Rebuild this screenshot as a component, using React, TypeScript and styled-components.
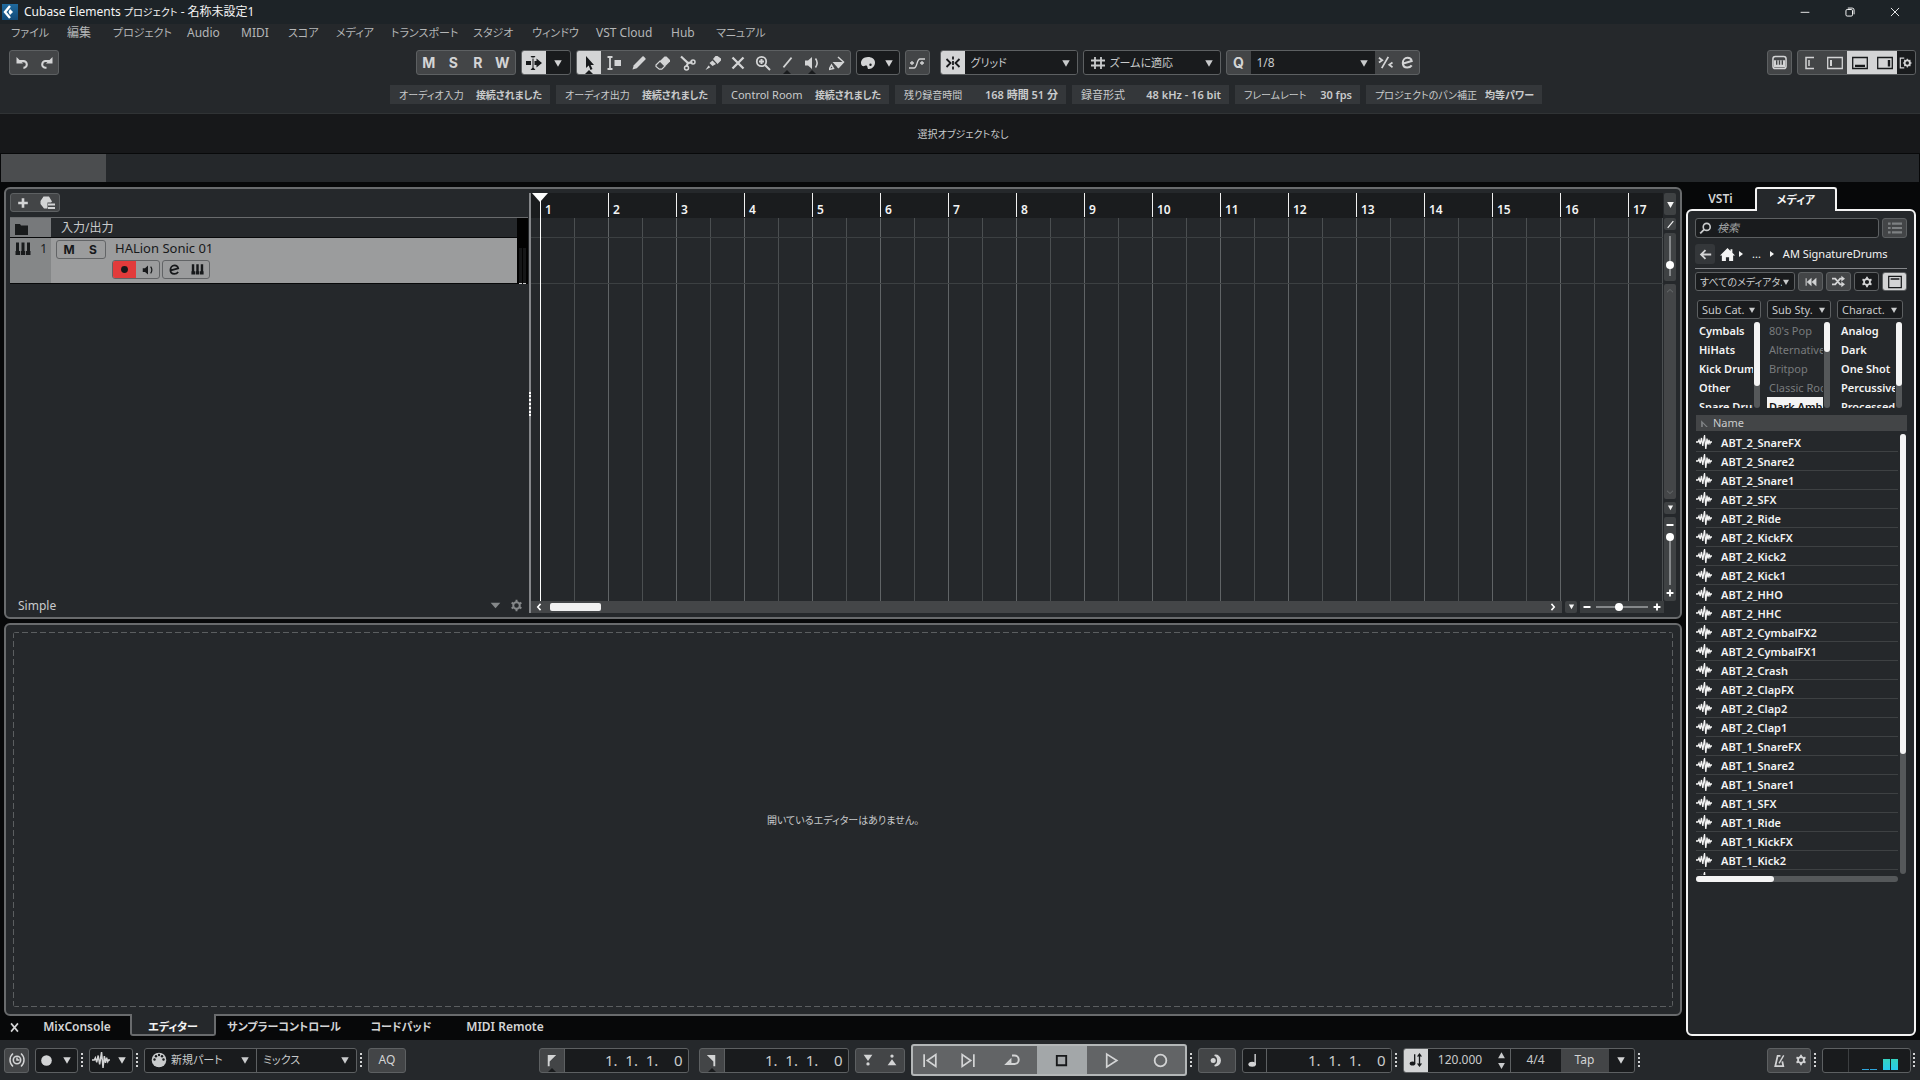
import React from "react";
import styled, { createGlobalStyle, css } from "styled-components";

const c = {
  panel: "#25282b",
  field: "#191b1d",
  button: "#434547",
  line: "#5d6062",
  zone: "#696b6d",
  text: "#c9cbcc",
  bright: "#f4f4f4",
  light: "#d3d4d5",
};

const Global = createGlobalStyle`
  *, *::before, *::after { box-sizing: border-box; }
  html, body { margin: 0; background: #070809; }
  body, button, input, select, table {
    font-family: "Noto Sans", "Noto Sans CJK JP", sans-serif;
    font-size: 12px;
    line-height: 16px;
    font-feature-settings: "palt";
    color: ${c.text};
  }
  button, input, select { margin: 0; padding: 0; border: 0; background: none; outline: none; }
  button { display: flex; align-items: center; justify-content: center; }
  svg { display: block; flex: none; }
`;

/* ---------- icons ---------- */

type IconName = keyof typeof icons;
const s = (w: number) => ({ fill: "none", stroke: "currentColor", strokeWidth: w });
const hasKana = (t: string) => /[ぁ-ヶ]/.test(t);

const icons = {
  undo: <><path d="M4 6.5h5a3.6 3.6 0 0 1 0 7.2" {...s(2.2)} /><path d="M1.6 2v7h7z" fill="currentColor" /></>,
  redo: <><path d="M8 13.6H7A3.6 3.6 0 0 1 7 6.4h5" {...s(2.2)} /><path d="M14.4 2v7h-7z" fill="currentColor" /></>,
  autoscroll: <path d="M0 6h5v4H0zM8.500 6h2V3.500L16 8l-5.500 4.500V10h-2zM4.500 1l2.500 3 2.500-3zM4.500 15l2.500-3 2.500 3zM6.500 2h1v12h-1z" fill="currentColor" />,
  arrow: <path d="M5 1v12l2.700-2.500L9.500 15l2-.9-1.900-4.200H13z" fill="currentColor" />,
  range: <><path d="M1.500 2h5M1.500 14h5M4 2v12" {...s(1.800)} /><path d="M8.500 5H15v6H8.500z" fill="currentColor" /></>,
  pencil: <path d="M1.500 14.500l1.300-4.300 8.600-8.600a1 1 0 0 1 1.400 0l1.600 1.600a1 1 0 0 1 0 1.400l-8.600 8.600z" fill="currentColor" />,
  eraser: <><path d="M1 10l4-4 5 5-3.200 3.200H4.300L1 11.500z" {...s(1.200)} /><path d="M5 6l4.500-4.500h2L15 5v1.500L10.500 11z" fill="currentColor" /></>,
  scissors: <><path d="M1 1.500l7 6.500 4.500-.8M8 8l-1.500 3.500" {...s(2.200)} /><circle cx="13" cy="7" r="2" {...s(1.500)} /><circle cx="6.500" cy="13" r="2" {...s(1.500)} /></>,
  glue: <path d="M0.500 15l3-4.500 1.800 1.800zM4.500 8l3-2.500 3.500 3.500-3.500 2zM8 4l2.500-3h2L16 3.500v2L12.500 9z" fill="currentColor" />,
  cross: <path d="M2.500 2.500l11 11M13.500 2.500l-11 11" {...s(2.300)} />,
  zoom: <><circle cx="6.500" cy="6.500" r="4.700" {...s(1.800)} /><path d="M4 6.500h5M6.500 4v5M10 10l5 5" {...s(2)} /></>,
  slash: <path d="M3 14L13 2" {...s(2)} />,
  speaker: <><path d="M1 5.500h3L8 2v12l-4-3.500H1z" fill="currentColor" /><path d="M11.500 3.500c2.200 3 2.200 6 0 9" {...s(1.600)} /></>,
  bucket: <><path d="M3.500 7h11L9 13z" fill="currentColor" /><path d="M9 2l5.500 5L9 13M0 14.500l2.500-4.500 2 3.500z" {...s(1.500)} /></>,
  palette: <path d="M8 2C3.500 2 1 4.800 1 8c0 2 1 3.200 2.500 3.200S6 10 7 11s0 3 2 3c3.500 0 6-3 6-6.500C15 4.200 12 2 8 2zm2.500 6.500a1.200 1.200 0 1 1 0 2.400 1.200 1.200 0 0 1 0-2.400z" fill="currentColor" />,
  curve: <path d="M0 13h5c3.500 0 2.500-9 6-9h5M1 8h4M11 8h4M3 6v4M13 6v4" {...s(1.300)} />,
  snap: <><path d="M8 1.500v3M8 11.500v3M1.500 4l4 4-4 4M14.500 4l-4 4 4 4M8 6v4" {...s(1.800)} /></>,
  hash: <path d="M5 2v12M11 2v12M1 5.500h14M1 10.500h14" {...s(1.800)} />,
  swing: <><path d="M4 14L11 2M1 3l3.500 2.500L1 8M15.500 8L12 10.500l3.500 2.500" {...s(1.900)} /></>,
  edit: <path d="M3.500 9L12.500 6.500C12 4 10 3 8 3 5 3 3 5.500 3 8.500s2 4.800 4.700 4.800c2 0 3.700-.8 4.800-2.300" {...s(2.200)} />,
  keyboard: <><rect x="1" y="1.500" width="14" height="13" rx="2.500" {...s(1.600)} /><path d="M2 5.500h12V13H2z" fill="currentColor" /><path d="M5 5.500v5M8 5.500v5M11 5.500v5" stroke="#434547" strokeWidth="1.500" /></>,
  paneInfo: <path d="M12 2.500H4v11h8M7 5v6" {...s(1.500)} />,
  paneLeft: <><path d="M0.700 2.500h14.600v11H.7z" {...s(1.300)} /><path d="M4 5v6" {...s(2)} /></>,
  paneBottom: <><path d="M0.700 2.500h14.600v11H.7z" {...s(1.300)} /><path d="M3 10.800h10" {...s(2.200)} /></>,
  paneRight: <><path d="M0.700 2.500h14.600v11H.7z" {...s(1.300)} /><path d="M12 5v6.500" {...s(2.400)} /></>,
  paneSetup: <><path d="M6 2.500H1.500v11H6" {...s(1.400)} /><circle cx="9.500" cy="8" r="3.100" {...s(2)} /><path d="M9.500 3v10M4.500 8h10M6 4.500l7 7M13 4.500l-7 7" {...s(1.300)} /><circle cx="9.500" cy="8" r="1.900" fill="#191b1d" /></>,
  gear: <><circle cx="8" cy="8" r="4" {...s(2.400)} /><path d="M8 1v3M8 12v3M2 4.500l2.500 1.500M11.500 10l2.500 1.500M2 11.500L4.500 10M11.500 6L14 4.500" {...s(2.400)} /></>,
  plus: <path d="M8 2.500v11M2.500 8h11" {...s(3)} />,
  preset: <><path d="M4.500 1.500H10l3 5-1 1H8.500v6H5L1.500 9V6z" fill="currentColor" /><path d="M9 9.500h7M9 13h7" {...s(2)} /></>,
  folder: <path d="M0 3h5l1 1.500h7V14H0z" fill="currentColor" />,
  keys: <><path d="M1 1.500h3v8.500H5V14H.500V10H1zM6.500 1.500h3V10h.7v4H5.800v-4h.7zM12 1.500h3V10h.5v4H11v-4h1z" fill="currentColor" /></>,
  dot: <circle cx="8" cy="8" r="5" fill="currentColor" />,
  tri: <path d="M2 3.500h12L8 14z" fill="currentColor" />,
  fold: <path d="M1 4h14l-7 8z" fill="currentColor" />,
  search: <><circle cx="9.500" cy="6" r="4.300" {...s(2)} /><path d="M6.500 9L1.500 14" {...s(2.200)} /></>,
  list: <path d="M0 3h3M0 8h3M0 13h3M4.500 3H16M4.500 8H16M4.500 13H16" {...s(2.300)} />,
  back: <path d="M15 8H3M8 2.500L2.500 8 8 13.500" {...s(2.200)} />,
  home: <path d="M8 1L0 9h2v6h4.300v-4h3.400v4H14V9h2l-2.800-2.800V2.500h-2v1.700z" fill="currentColor" />,
  right: <path d="M4 2v12l8-6z" fill="currentColor" />,
  rewind: <path d="M1.500 3v10M8 4L3.500 8 8 12zM14.500 4L10 8l4.500 4z" fill="currentColor" stroke="currentColor" strokeWidth="1.400" />,
  shuffle: <><path d="M0 4.500h4l6 7h3M0 11.500h4l6-7h3" {...s(2.200)} /><path d="M11.500 1l4.500 3.500L11.500 8zM11.500 8l4.500 3.500-4.500 3.500z" fill="currentColor" /></>,
  layout: <><path d="M.8 1.500h14.400v13H.8z" {...s(1.400)} /><path d="M3 4.500h10" {...s(1.700)} /></>,
  wave: <path d="M0 8h2l1-2 1.200 4L5.500 4l1.300 8L8.500 1l1.300 14L11 4.500l1 6 1-4.500 1 3.500.7-1.500H16" {...s(1.300)} />,
  sort: <path d="M2 2v12h3V8l6 6h3z" fill="currentColor" />,
  close: <path d="M3 2l10 12M13 2L3 14" {...s(2.400)} />,
  clock: <><circle cx="8" cy="8" r="3.700" {...s(1.600)} /><path d="M8 5.500V8h2.500M4 1.500C0 5 0 11 4 14.500M12 1.500c4 3.500 4 9.500 0 13" {...s(1.500)} /></>,
  midi: <><circle cx="8" cy="8" r="7.300" fill="currentColor" /><g fill="#191b1d"><circle cx="3.500" cy="7.500" r="1.200" /><circle cx="5" cy="4.300" r="1.200" /><circle cx="8" cy="3" r="1.200" /><circle cx="11" cy="4.300" r="1.200" /><circle cx="12.500" cy="7.500" r="1.200" /></g></>,
  flagL: <path d="M4 2h9L6 9v5H4z" fill="currentColor" />,
  flagR: <path d="M12 2H3l7 7v5h2z" fill="currentColor" />,
  punchIn: <><path d="M3 2h10L8 9z" fill="currentColor" /><circle cx="8" cy="12.500" r="1.900" fill="currentColor" /></>,
  punchOut: <><path d="M3 14h10L8 7z" fill="currentColor" /><circle cx="8" cy="3.500" r="1.900" fill="currentColor" /></>,
  toStart: <path d="M2 2v12M13 2.500v11L5 8z" {...s(1.600)} />,
  toEnd: <path d="M14 2v12M3 2.500v11L11 8z" {...s(1.600)} />,
  cycle: <path d="M8 3.500h2.500a3.900 3.900 0 0 1 0 8.500H2.500l4-4v4" {...s(1.900)} />,
  stop: <path d="M3 3h10v10H3z" {...s(2)} />,
  play: <path d="M3.500 2l9.500 6-9.500 6z" {...s(1.600)} />,
  record: <circle cx="8" cy="8" r="5.500" {...s(1.700)} />,
  sync: <><circle cx="4.500" cy="8" r="2.700" fill="currentColor" /><path d="M6 2.500c3.300-.5 6 2 6 5.500s-2.700 6-6 5.500c4.500-1.500 4.500-9.500 0-11z" fill="currentColor" stroke="currentColor" strokeWidth="1.500" /></>,
  note: <><ellipse cx="5.500" cy="12" rx="4" ry="2.700" fill="currentColor" /><path d="M8.700 1v11" {...s(1.500)} /></>,
  tempo: <><ellipse cx="4" cy="12" rx="3.200" ry="2.400" fill="currentColor" /><path d="M6.500 1.500V12M12 3v10" {...s(1.500)} /><path d="M12 0l3 4H9zM12 16l3-4H9z" fill="currentColor" /></>,
  metronome: <><path d="M11 9l1 5H3.500L6 3h3" {...s(1.900)} /><path d="M7.500 11L12.500 2.500" {...s(1.500)} /></>,
  up: <path d="M2 13h12L8 2z" fill="currentColor" />,
  chevL: <path d="M10.500 3L6 8l4.500 5" {...s(2.500)} />,
  chevR: <path d="M5.500 3L10 8l-4.500 5" {...s(2.500)} />,
  chevU: <path d="M2 10.500L8 5l6 5.500" {...s(1.300)} />,
  chevD: <path d="M2 5.500L8 11l6-5.500" {...s(1.300)} />,
  minus: <path d="M1 8h14" {...s(4)} />,
  winMin: <path d="M1 8.500h14" {...s(1.400)} />,
  winRestore: <><rect x="1.500" y="4" width="10.500" height="10.500" rx="2" {...s(1.500)} /><path d="M4.500 1.700h7a3 3 0 0 1 3 3v7" {...s(1.500)} /></>,
  winClose: <path d="M1.500 1.500l13 13M14.500 1.500l-13 13" {...s(1.400)} />,
};

const Icon = ({ name, size = 16 }: { name: IconName; size?: number }) => (
  <svg width={size} height={size} viewBox="0 0 16 16" aria-hidden="true">{icons[name]}</svg>
);

/* ---------- shared controls ---------- */

const Group = styled.div<{ $dark?: boolean; $w?: number }>`
  display: flex;
  flex: none;
  height: 25px;
  width: ${(p) => (p.$w ? `${p.$w}px` : "auto")};
  border: 1px solid ${c.line};
  border-radius: 3px;
  overflow: hidden;
  background: ${(p) => (p.$dark ? c.field : c.button)};
`;

const Btn = styled.button<{ $w?: number; $on?: boolean; $dark?: boolean; $notch?: boolean; $dim?: boolean }>`
  position: relative;
  flex: ${(p) => (p.$w ? `0 0 ${p.$w}px` : "1 1 0")};
  min-width: 0;
  color: ${(p) => (p.$on ? "#17191b" : p.$dim ? "#7d8082" : c.light)};
  background: ${(p) => (p.$on ? c.light : p.$dark ? c.field : "transparent")};
  ${(p) => p.$notch && css`
    &::after {
      content: "";
      position: absolute;
      left: 50%;
      bottom: 0;
      margin-left: -4px;
      border: 4px solid transparent;
      border-top: 0;
      border-bottom-color: ${c.field};
    }
  `}
`;

const Letter = styled(Btn)`
  font: 700 14px/16px Inter, sans-serif;
`;

const SelectBox = styled.label<{ $w?: number; $div?: boolean; $tight?: boolean; $fs: number }>`
  position: relative;
  display: flex;
  align-items: center;
  flex: ${(p) => (p.$w ? `0 0 ${p.$w}px` : "1 1 0")};
  min-width: 0;
  gap: 4px;
  padding-left: ${(p) => (p.$tight ? 4 : 6)}px;
  background: ${c.field};
  border-left: ${(p) => (p.$div ? `1px solid ${c.line}` : "0")};
  select {
    appearance: none;
    flex: 1;
    min-width: 0;
    height: 100%;
    padding-right: ${(p) => (p.$tight ? 12 : 20)}px;
    font-size: ${(p) => p.$fs}px;
  }
  > svg:last-child { position: absolute; right: ${(p) => (p.$tight ? 4 : 6)}px; pointer-events: none; }
`;

type DropProps = { label: string; value: string; w?: number; icon?: IconName; div?: boolean; tight?: boolean; fs?: number };
const Drop = ({ label, value, w, icon, div, tight, fs = 12 }: DropProps) => (
  <SelectBox $w={w} $div={div} $tight={tight} $fs={fs}>
    {icon && <Icon name={icon} size={16} />}
    <select aria-label={label}><option>{value}</option></select>
    <Icon name="tri" size={tight ? 8 : 10} />
  </SelectBox>
);

/* ---------- header ---------- */

const Page = styled.div`
  display: flex;
  flex-direction: column;
  height: 100vh;
  min-height: 900px;
  min-width: 1640px;
`;
const Header = styled.header`
  background: ${c.panel};
  border-bottom: 1px solid #303335;
`;
const TitleBar = styled.div`
  display: flex;
  align-items: center;
  height: 24px;
  gap: 6px;
  padding-left: 2px;
  background: #1d2327;
  color: ${c.bright};
`;
const AppLogo = styled.svg`
  width: 16px;
  height: 16px;
  background: linear-gradient(#1f6a9e, #124a78);
`;
const WindowTitle = styled.h1`
  margin: 0;
  font-size: 12px;
  font-weight: 400;
  flex: 1;
  small { font-size: 10px; }
`;
const WinButton = styled.button`
  width: 45px;
  height: 22px;
  color: #fff;
`;
const WinButtons = styled.div`
  display: flex;
  padding-right: 3px;
`;
const Menu = styled.nav`
  display: flex;
  height: 18px;
  padding: 1px 0 0 11px;
`;
const MenuItem = styled.a<{ $w: number; $kana: boolean }>`
  width: ${(p) => p.$w}px;
  white-space: nowrap;
  color: #b4b6b7;
  text-decoration: none;
  font-size: ${(p) => (p.$kana ? 11 : 12)}px;
`;
const menu: [string, number][] = [
  ["ファイル", 56], ["編集", 46], ["プロジェクト", 74], ["Audio", 54], ["MIDI", 47], ["スコア", 48],
  ["メディア", 55], ["トランスポート", 82], ["スタジオ", 59], ["ウィンドウ", 64], ["VST Cloud", 75], ["Hub", 45], ["マニュアル", 60],
];
const Toolbar = styled.div`
  display: flex;
  justify-content: space-between;
  padding: 8px 4px 10px 9px;
`;
const Cluster = styled.div<{ $gap?: number; $shift?: number }>`
  display: flex;
  align-items: center;
  gap: ${(p) => p.$gap ?? 5}px;
  padding-left: ${(p) => p.$shift ?? 0}px;
`;
const InfoLine = styled.div`
  display: flex;
  justify-content: center;
  gap: 6px;
  padding: 0 0 9px 12px;
`;
const Chip = styled.div<{ $w: number }>`
  display: flex;
  align-items: center;
  justify-content: space-between;
  gap: 8px;
  height: 19px;
  min-width: ${(p) => p.$w}px;
  padding: 0 8px 0 9px;
  background: #34373a;
  white-space: nowrap;
`;
const ChipText = styled.span<{ $kana: boolean; $bold?: boolean }>`
  font-size: ${(p) => (p.$kana ? 10 : 11)}px;
  font-weight: ${(p) => (p.$bold ? 600 : 400)};
`;
const info: [string, string, number][] = [
  ["オーディオ入力", "接続されました", 160], ["オーディオ出力", "接続されました", 160], ["Control Room", "接続されました", 167],
  ["残り録音時間", "168 時間 51 分", 171], ["録音形式", "48 kHz - 16 bit", 157], ["フレームレート", "30 fps", 125],
  ["プロジェクトのパン補正", "均等パワー", 176],
];
const StatusLine = styled.div`
  display: flex;
  align-items: center;
  justify-content: center;
  height: 40px;
  padding-left: 6px;
  background: #17181a;
  border-bottom: 1px solid #08090a;
  font-size: 10px;
`;
const Overview = styled.div`
  height: 28px;
  margin: 0 1px 5px;
  background: ${c.panel};
  div { width: 105px; height: 100%; background: #4b4d4f; }
`;

/* ---------- project zone ---------- */

const Main = styled.main`
  flex: 1;
  min-height: 0;
  display: grid;
  grid-template-columns: minmax(0, 1fr) 230px;
  gap: 4px;
  padding: 0 4px;
`;
const LeftZone = styled.div`
  display: flex;
  flex-direction: column;
  min-height: 0;
`;
const Frame = styled.section<{ $grow: number }>`
  display: flex;
  flex: ${(p) => p.$grow} 1 0;
  min-height: 0;
  border: 2px solid ${c.zone};
  border-radius: 6px;
  background: ${c.panel};
`;
const TrackList = styled.div`
  display: flex;
  flex-direction: column;
  width: 523px;
  padding: 4px 1px 4px 4px;
`;
const SmallGroup = styled(Group)<{ $h?: number }>`
  height: ${(p) => p.$h ?? 19}px;
`;
const TrackTable = styled.div`
  display: grid;
  grid-template-columns: minmax(0, 1fr) 11px;
  margin-top: 5px;
  border-top: 1px solid ${c.zone};
`;
const Rows = styled.div`
  display: flex;
  flex-direction: column;
`;
const TrackRow = styled.div<{ $h: number; $sel?: boolean }>`
  display: flex;
  height: ${(p) => p.$h}px;
  border-bottom: 1px solid #08090a;
  background: ${(p) => (p.$sel ? "#9b9c9d" : c.panel)};
`;
const TrackIcon = styled.div<{ $sel?: boolean }>`
  display: flex;
  align-items: flex-start;
  justify-content: space-between;
  width: 41px;
  padding: 3px 4px 0 5px;
  background: ${(p) => (p.$sel ? "#858788" : "#77797b")};
  color: #191b1c;
`;
const FolderName = styled.span`
  padding: 2px 10px 0;
`;
const TrackBody = styled.div`
  display: grid;
  grid-template-columns: 50px 1fr;
  grid-template-rows: 19px 19px;
  column-gap: 6px;
  row-gap: 1px;
  padding: 2px 5px;
  color: #17191b;
  strong { padding-left: 3px; font-weight: 400; font-size: 13px; }
`;
const TrackGroup = styled.div<{ $w: number }>`
  display: flex;
  width: ${(p) => p.$w}px;
  height: 19px;
  border: 1px solid #626466;
  border-radius: 3px;
  overflow: hidden;
  button { flex: 1; color: #17191b; font: 700 12px/14px Inter, sans-serif; }
`;
const RecButton = styled.button`
  background: #e23b3b;
`;
const Meter = styled.div`
  display: flex;
  align-items: flex-end;
  justify-content: space-evenly;
  background: #020202;
  i { width: 3px; height: 36px; border-bottom: 1px solid #c8c8c8; background: #151617; }
`;
const TrackFooter = styled.div`
  display: flex;
  align-items: center;
  gap: 9px;
  height: 14px;
  margin-top: auto;
  padding: 0 5px 0 8px;
  color: #85888a;
  span { flex: 1; color: ${c.text}; }
`;
const Splitter = styled.div`
  position: relative;
  width: 2px;
  margin: 4px 0;
  background: #85878a;
  &::after {
    content: "";
    position: absolute;
    left: 0;
    top: 199px;
    height: 24px;
    border-left: 2px dotted #fff;
  }
`;
const Arrange = styled.div`
  display: grid;
  flex: 1;
  min-width: 0;
  grid-template-columns: minmax(0, 1fr) 12px;
  grid-template-rows: minmax(0, 1fr) 12px;
  column-gap: 1px;
  padding: 4px 4px 4px 0;
`;
const Canvas = styled.div`
  position: relative;
  display: flex;
  flex-direction: column;
  min-width: 0;
  overflow: hidden;
`;
const Ruler = styled.ol`
  display: flex;
  height: 25px;
  margin: 0;
  padding: 0 0 0 9px;
  list-style: none;
  background: #1a1c1e;
`;
const Bar = styled.li`
  flex: 0 0 68px;
  height: 24px;
  padding: 9px 0 0 4px;
  border-left: 1px solid #f0f0f0;
  font-weight: 600;
  color: ${c.bright};
`;
const Lane = styled.div<{ $h?: number }>`
  flex: ${(p) => (p.$h ? `0 0 ${p.$h}px` : "1")};
  border-bottom: ${(p) => (p.$h ? "1px solid #3c4042" : "0")};
  background-image: linear-gradient(90deg, #606466 1px, transparent 1px), linear-gradient(90deg, #4b4f51 1px, transparent 1px);
  background-size: 68px 100%, 68px 100%;
  background-position: 9px 0, 43px 0;
`;
const Playhead = styled.div`
  position: absolute;
  top: 0;
  bottom: 0;
  left: 9px;
  width: 1px;
  background: #fff;
  &::before {
    content: "";
    position: absolute;
    left: -8px;
    border: 8px solid transparent;
    border-top: 9px solid #fff;
    border-bottom: 0;
  }
`;
const SideTools = styled.div`
  display: flex;
  flex-direction: column;
  gap: 3px;
`;
const Tiny = styled.button<{ $h: number }>`
  flex: none;
  width: 12px;
  height: ${(p) => p.$h}px;
  border-radius: 2px;
  background: #3f4244;
  color: ${c.bright};
`;
const SliderBox = styled.div<{ $h: number }>`
  display: flex;
  flex-direction: column;
  align-items: center;
  justify-content: space-between;
  flex: none;
  height: ${(p) => p.$h}px;
  padding: 3px 0;
  border-radius: 2px;
  background: #3f4244;
`;
const Slider = styled.input<{ $len: number; $vertical?: boolean }>`
  appearance: none;
  ${(p) => p.$vertical
    ? css`writing-mode: vertical-lr; width: 8px; height: ${p.$len}px; background: linear-gradient(#85888a, #85888a) center / 2px 100% no-repeat;`
    : css`width: ${p.$len}px; height: 8px; background: linear-gradient(#85888a, #85888a) center / 100% 2px no-repeat;`}
  &::-webkit-slider-thumb {
    appearance: none;
    width: 8px;
    height: 8px;
    border-radius: 50%;
    background: #fff;
  }
`;
const StepBtn = styled.button`
  width: 12px;
  height: 10px;
  color: #fff;
`;
const VScroll = styled.div`
  display: flex;
  flex: 1;
  flex-direction: column;
  align-items: center;
  justify-content: space-between;
  padding: 3px 0;
  background: #444648;
  border-radius: 2px;
  color: #7c7f81;
`;
const BottomTools = styled.div`
  grid-column: 1 / 3;
  display: flex;
  gap: 3px;
  padding-right: 12px;
`;
const HScroll = styled.div`
  display: flex;
  flex: 1;
  align-items: center;
  gap: 6px;
  padding: 0 4px 0 3px;
  background: #444648;
  color: #fff;
  i { width: 51px; height: 8px; margin-right: auto; border-radius: 2px; background: #f1f1f1; }
`;
const ZoomH = styled.div`
  display: flex;
  align-items: center;
  justify-content: space-between;
  width: 84px;
  padding: 0 1px;
  background: #3a3d3f;
`;

/* ---------- lower zone ---------- */

const LowerFrame = styled(Frame)`
  margin-top: 4px;
`;
const dash = (angle: number) => `repeating-linear-gradient(${angle}deg, #5b5e60 0 6px, transparent 6px 9px)`;
const Empty = styled.div`
  display: flex;
  flex: 1;
  align-items: center;
  justify-content: center;
  margin: 7px;
  padding-top: 2px;
  background:
    ${dash(90)} top / 100% 1px no-repeat,
    ${dash(90)} bottom / 100% 1px no-repeat,
    ${dash(180)} left / 1px 100% no-repeat,
    ${dash(180)} right / 1px 100% no-repeat;
  border-radius: 3px;
  font-size: 10px;
`;
const Tabs = styled.nav`
  display: flex;
  height: 24px;
`;
const Tab = styled.button<{ $w: number; $on?: boolean; $kana?: boolean }>`
  flex: 0 0 ${(p) => p.$w}px;
  height: 22px;
  white-space: nowrap;
  font-weight: 600;
  font-size: ${(p) => (p.$kana ? 11 : 12)}px;
  color: ${(p) => (p.$on ? c.bright : c.light)};
  ${(p) => p.$on && css`
    margin-top: -2px;
    height: 22px;
    padding-top: 5px;
    border: 2px solid ${c.zone};
    border-top: 0;
    border-radius: 0 0 3px 3px;
    background: ${c.panel};
  `}
`;

/* ---------- media zone ---------- */

const RightZone = styled.aside`
  display: flex;
  flex-direction: column;
  min-height: 0;
  padding-bottom: 4px;
`;
const MediaTabs = styled.div`
  display: flex;
  height: 24px;
`;
const MediaTab = styled.button<{ $w: number; $on?: boolean; $kana?: boolean }>`
  width: ${(p) => p.$w}px;
  font-size: ${(p) => (p.$kana ? 11 : 12)}px;
  font-weight: 600;
  color: ${c.light};
  ${(p) => p.$on && css`
    z-index: 1;
    color: ${c.bright};
    border: 2px solid #f4f4f4;
    border-bottom: 0;
    border-radius: 3px 3px 0 0;
    background: ${c.panel};
  `}
`;
const MediaPanel = styled.div`
  flex: 1;
  min-height: 0;
  margin-top: -2px;
  padding: 7px;
  border: 2px solid #f4f4f4;
  border-radius: 6px;
  background: ${c.panel};
`;
const MediaRow = styled.div<{ $mb: number }>`
  display: flex;
  align-items: center;
  gap: 3px;
  margin-bottom: ${(p) => p.$mb}px;
`;
const Search = styled.label`
  display: flex;
  align-items: center;
  flex: 1;
  min-width: 0;
  height: 20px;
  gap: 5px;
  padding-left: 3px;
  border: 1px solid ${c.line};
  border-radius: 3px;
  background: ${c.field};
  input { flex: 1; min-width: 0; font-size: 11px; font-style: italic; }
  input::placeholder { color: #a0a2a3; opacity: 1; }
`;
const Path = styled.div`
  display: flex;
  align-items: center;
  gap: 2px;
  height: 25px;
  padding-bottom: 4px;
  margin-bottom: 3px;
  border-bottom: 1px solid #85878a;
  white-space: nowrap;
  color: ${c.bright};
`;
const BackBtn = styled.button`
  width: 20px;
  height: 20px;
  margin-right: 3px;
  border-radius: 3px;
  background: #34373a;
  color: ${c.light};
`;
const Crumb = styled.a<{ $pad: number }>`
  padding: 0 ${(p) => p.$pad}px;
  font-size: 11px;
  color: inherit;
  text-decoration: none;
`;
const Filters = styled.div`
  display: grid;
  grid-template-columns: 64px 64px 66px;
  gap: 2px 6px;
  padding-left: 2px;
  margin-bottom: 7px;
`;
const FilterList = styled.div<{ $pad: number }>`
  display: flex;
  height: 87px;
  padding-left: ${(p) => p.$pad}px;
  overflow: hidden;
  ul { flex: 1; min-width: 0; margin: 0; padding: 0; list-style: none; overflow: hidden; }
`;
const FilterItem = styled.li<{ $dim?: boolean; $sel?: boolean }>`
  height: 19px;
  padding: 2px 0 1px 2px;
  font-size: 11px;
  white-space: nowrap;
  font-weight: ${(p) => (p.$dim ? 400 : 600)};
  color: ${(p) => (p.$sel ? "#111" : p.$dim ? "#787b7d" : c.bright)};
  background: ${(p) => (p.$sel ? "#f4f4f4" : "none")};
`;
const Track = styled.div<{ $thumb: number; $w?: number }>`
  flex: none;
  width: ${(p) => (p.$w ? `${p.$w}px` : "6px")};
  height: ${(p) => (p.$w ? "6px" : "auto")};
  margin: 1px;
  margin-bottom: 0;
  border-radius: 3px;
  background: #55585a;
  &::before {
    content: "";
    display: block;
    width: ${(p) => (p.$w ? `${p.$thumb}px` : "6px")};
    height: ${(p) => (p.$w ? "6px" : `${p.$thumb}px`)};
    border-radius: 3px;
    background: #f4f4f4;
  }
`;
const Results = styled.div`
  display: flex;
  height: 460px;
  overflow: hidden;
`;
const ResultTable = styled.table`
  flex: 1;
  display: block;
  border-spacing: 0;
  tr { display: flex; align-items: center; }
  thead tr { height: 16px; width: 211px; margin: 0 -9px 2px 1px; background: #434547; gap: 4px; padding-left: 4px; color: #808385; }
  th { font-size: 11px; font-weight: 400; padding: 0; color: ${c.text}; }
  tbody tr { height: 19px; margin-left: 1px; gap: 9px; border-bottom: 1px solid #3e4143; color: ${c.bright}; }
  td { padding: 0; font-size: 11px; font-weight: 600; }
  tbody td + td { padding-top: 1px; }
`;
const ResultTrack = styled.div`
  display: flex;
  justify-content: flex-end;
  width: 9px;
  padding: 18px 0 1px;
`;

const files = [2, 1].flatMap((n) =>
  ["SnareFX", "Snare2", "Snare1", "SFX", "Ride", "KickFX", "Kick2", "Kick1", "HHO", "HHC", "CymbalFX2", "CymbalFX1", "Crash", "ClapFX", "Clap2", "Clap1"]
    .map((f) => `ABT_${n}_${f}`)).slice(0, 24);

const filters = [
  { label: "Sub Cat.", items: ["Cymbals", "HiHats", "Kick Drum", "Other", "Snare Drum"], thumb: 64, pad: 0 },
  { label: "Sub Sty.", items: ["80's Pop", "Alternative", "Britpop", "Classic Rock", "Dark Ambient"], thumb: 30, pad: 0, dim: true },
  { label: "Charact.", items: ["Analog", "Dark", "One Shot", "Percussive", "Processed"], thumb: 64, pad: 2 },
];

/* ---------- transport ---------- */

const Transport = styled.footer`
  display: flex;
  align-items: center;
  justify-content: space-between;
  flex: none;
  height: 40px;
  padding: 0 5px 0 4px;
  background: ${c.panel};
`;
const Dots = styled.i`
  width: 2px;
  height: 14px;
  border-left: 2px dotted ${c.light};
`;
const Position = styled.input`
  flex: 1;
  min-width: 0;
  padding-right: 5px;
  border-left: 1px solid ${c.line};
  background: ${c.field};
  text-align: right;
  font-size: 15px;
  white-space: pre;
`;
const MainTransport = styled.div`
  display: flex;
  width: 276px;
  height: 32px;
  border: 2px solid #b4b7b8;
  border-radius: 3px;
  background: #626466;
  overflow: hidden;
`;
const StopBtn = styled(Btn)`
  background: #a3a7a9;
`;
const TempoField = styled.input<{ $w: number }>`
  flex: 0 0 ${(p) => p.$w}px;
  min-width: 0;
  background: ${c.field};
  text-align: center;
`;
const Spin = styled.div`
  display: flex;
  flex-direction: column;
  justify-content: center;
  gap: 1px;
  width: 18px;
  align-items: center;
  background: ${c.field};
  border-right: 1px solid ${c.line};
`;
const Levels = styled.div`
  display: flex;
  align-items: flex-end;
  gap: 1px;
  height: 25px;
  width: 89px;
  padding: 0 12px 2px 0;
  border: 1px solid ${c.line};
  border-radius: 3px;
  background: ${c.field};
`;
const LevelDivider = styled.span`
  width: 26px;
  height: 23px;
  margin: 0 auto -2px 0;
  border-right: 1px solid #3c3f41;
`;
const Level = styled.i<{ $h: number; $gap?: boolean }>`
  width: 7px;
  height: ${(p) => p.$h}px;
  margin-left: ${(p) => (p.$gap ? 5 : 0)}px;
  background: ${(p) => (p.$h > 4 ? "linear-gradient(#35d3c0, #27c9ee)" : "#2fa6dd")};
`;

const tools: [IconName, string, boolean?][] = [
  ["arrow", "Select", true], ["range", "Range"], ["pencil", "Draw"], ["eraser", "Erase"], ["scissors", "Split"], ["glue", "Glue"],
  ["cross", "Mute"], ["zoom", "Zoom"], ["slash", "Line", true], ["speaker", "Play", true], ["bucket", "Color"],
];

export default function App() {
  return (
    <Page>
      <Global />
      <Header>
        <TitleBar>
          <AppLogo viewBox="0 0 16 16"><path d="M8 2L3 8l5 6" fill="none" stroke="#fff" strokeWidth="2.400" /><path d="M8 5l3 3-3 3-1.500-3z" fill="#fff" /></AppLogo>
          <WindowTitle>Cubase Elements <small>プロジェクト</small> - 名称未設定1</WindowTitle>
          <WinButtons>
            <WinButton aria-label="Minimize"><Icon name="winMin" size={10} /></WinButton>
            <WinButton aria-label="Restore"><Icon name="winRestore" size={10} /></WinButton>
            <WinButton aria-label="Close"><Icon name="winClose" size={10} /></WinButton>
          </WinButtons>
        </TitleBar>
        <Menu>{menu.map(([t, w]) => <MenuItem key={t} href="#" $w={w} $kana={hasKana(t)}>{t}</MenuItem>)}</Menu>
        <Toolbar>
          <Group $w={50}>
            <Btn aria-label="Undo"><Icon name="undo" size={15} /></Btn>
            <Btn aria-label="Redo"><Icon name="redo" size={15} /></Btn>
          </Group>
          <Cluster $shift={9}>
            <Group $w={100}>{["M", "S", "R", "W"].map((l) => <Letter key={l}>{l}</Letter>)}</Group>
            <Group $w={50} $dark>
              <Btn $on $w={24} aria-label="Auto scroll"><Icon name="autoscroll" /></Btn>
              <Btn aria-label="Auto scroll options"><Icon name="tri" size={10} /></Btn>
            </Group>
            <Group $w={275}>
              {tools.map(([n, l, notch], i) => (
                <Btn key={n} aria-label={l} $on={i === 0} $notch={notch}><Icon name={n} size={n === "slash" ? 13 : 16} /></Btn>
              ))}
            </Group>
            <Group $w={44} $dark>
              <Btn aria-label="Color menu"><Icon name="palette" size={16} /></Btn>
              <Btn $w={20} aria-label="Color options"><Icon name="tri" size={10} /></Btn>
            </Group>
            <Group $w={25}><Btn aria-label="Crossfade"><Icon name="curve" size={16} /></Btn></Group>
            <span />
            <Group $w={138} $dark>
              <Btn $on $w={24} aria-label="Snap"><Icon name="snap" /></Btn>
              <Drop label="Snap type" value="グリッド" fs={11} />
            </Group>
            <Group $w={138}><Drop label="Grid type" value="ズームに適応" icon="hash" fs={11} /></Group>
            <Group $w={194}>
              <Letter $w={24} aria-label="Quantize">Q</Letter>
              <Drop label="Quantize preset" value="1/8" />
              <Btn $w={22} aria-label="Swing"><Icon name="swing" size={15} /></Btn>
              <Btn $w={22} aria-label="Quantize panel"><Icon name="edit" size={15} /></Btn>
            </Group>
          </Cluster>
          <Cluster>
            <Group $w={25}><Btn aria-label="On-screen keyboard"><Icon name="keyboard" size={15} /></Btn></Group>
            <Group $w={119}>
              <Btn $w={24} aria-label="Info"><Icon name="paneInfo" size={16} /></Btn>
              <Btn $w={25} aria-label="Left zone"><Icon name="paneLeft" /></Btn>
              <Btn $w={25} $on aria-label="Lower zone"><Icon name="paneBottom" /></Btn>
              <Btn $w={25} $on aria-label="Right zone"><Icon name="paneRight" /></Btn>
              <Btn $dark aria-label="Set up layout"><Icon name="paneSetup" size={14} /></Btn>
            </Group>
          </Cluster>
        </Toolbar>
        <InfoLine>
          {info.map(([a, b, w]) => (
            <Chip key={a} $w={w}>
              <ChipText $kana={hasKana(a)}>{a}</ChipText>
              <ChipText $kana={hasKana(b)} $bold>{b}</ChipText>
            </Chip>
          ))}
        </InfoLine>
      </Header>
      <StatusLine>選択オブジェクトなし</StatusLine>
      <Overview><div /></Overview>

      <Main>
        <LeftZone>
          <Frame $grow={432}>
            <TrackList>
              <SmallGroup $w={50}>
                <Btn aria-label="Add track"><Icon name="plus" size={14} /></Btn>
                <Btn aria-label="Track preset"><Icon name="preset" size={16} /></Btn>
              </SmallGroup>
              <TrackTable>
                <Rows>
                  <TrackRow $h={20}><TrackIcon><Icon name="folder" /></TrackIcon><FolderName>入力/出力</FolderName></TrackRow>
                  <TrackRow $h={46} $sel>
                    <TrackIcon $sel><Icon name="keys" /><span>1</span></TrackIcon>
                    <TrackBody>
                      <TrackGroup $w={50}><button>M</button><button>S</button></TrackGroup>
                      <strong>HALion Sonic 01</strong>
                      <span />
                      <Cluster $gap={2}>
                        <TrackGroup $w={48}>
                          <RecButton aria-label="Record enable"><Icon name="dot" size={11} /></RecButton>
                          <button aria-label="Monitor"><Icon name="speaker" size={12} /></button>
                        </TrackGroup>
                        <TrackGroup $w={48}>
                          <button aria-label="Edit channel"><Icon name="edit" size={13} /></button>
                          <button aria-label="Edit instrument"><Icon name="keys" size={13} /></button>
                        </TrackGroup>
                      </Cluster>
                    </TrackBody>
                  </TrackRow>
                </Rows>
                <Meter><i /><i /></Meter>
              </TrackTable>
              <TrackFooter><span>Simple</span><Icon name="fold" size={11} /><Icon name="gear" size={13} /></TrackFooter>
            </TrackList>
            <Splitter />
            <Arrange>
              <Canvas>
                <Ruler>{Array.from({ length: 17 }, (_, i) => <Bar key={i}>{i + 1}</Bar>)}</Ruler>
                <Lane $h={20} /><Lane $h={46} /><Lane />
                <Playhead />
              </Canvas>
              <SideTools>
                <Tiny $h={22} aria-label="Ruler options"><Icon name="tri" size={9} /></Tiny>
                <Tiny $h={12} aria-label="Draw"><Icon name="slash" size={9} /></Tiny>
                <SliderBox $h={48}><Slider $vertical $len={40} type="range" defaultValue={79} aria-label="Waveform zoom" /></SliderBox>
                <VScroll><Icon name="chevU" size={8} /><Icon name="chevD" size={8} /></VScroll>
                <Tiny $h={12} aria-label="Zoom presets"><Icon name="tri" size={7} /></Tiny>
                <SliderBox $h={84}>
                  <StepBtn aria-label="Zoom out vertically"><Icon name="minus" size={8} /></StepBtn>
                  <Slider $vertical $len={52} type="range" defaultValue={0} aria-label="Vertical zoom" />
                  <StepBtn aria-label="Zoom in vertically"><Icon name="plus" size={10} /></StepBtn>
                </SliderBox>
              </SideTools>
              <BottomTools>
                <HScroll><Icon name="chevL" size={10} /><i /><Icon name="chevR" size={10} /></HScroll>
                <Tiny $h={12} aria-label="Zoom presets"><Icon name="tri" size={7} /></Tiny>
                <ZoomH>
                  <StepBtn aria-label="Zoom out"><Icon name="minus" size={8} /></StepBtn>
                  <Slider $len={52} type="range" defaultValue={43} aria-label="Horizontal zoom" />
                  <StepBtn aria-label="Zoom in"><Icon name="plus" size={10} /></StepBtn>
                </ZoomH>
              </BottomTools>
            </Arrange>
          </Frame>
          <LowerFrame $grow={393}><Empty>開いているエディターはありません。</Empty></LowerFrame>
          <Tabs>
            <Tab $w={20} aria-label="Close"><Icon name="close" size={11} /></Tab>
            <Tab $w={106}>MixConsole</Tab>
            <Tab $w={86} $on $kana>エディター</Tab>
            <Tab $w={136} $kana>サンプラーコントロール</Tab>
            <Tab $w={98} $kana>コードパッド</Tab>
            <Tab $w={110}>MIDI Remote</Tab>
          </Tabs>
        </LeftZone>

        <RightZone>
          <MediaTabs><MediaTab $w={69}>VSTi</MediaTab><MediaTab $w={82} $on $kana>メディア</MediaTab></MediaTabs>
          <MediaPanel>
            <MediaRow $mb={6}>
              <Search><Icon name="search" size={13} /><input aria-label="検索" placeholder="検索" /></Search>
              <SmallGroup $h={20} $w={25}><Btn $dim aria-label="List view"><Icon name="list" size={14} /></Btn></SmallGroup>
            </MediaRow>
            <Path>
              <BackBtn aria-label="Back"><Icon name="back" size={13} /></BackBtn>
              <Icon name="home" size={15} /><Icon name="right" size={8} />
              <Crumb href="#" $pad={5}>...</Crumb><Icon name="right" size={8} />
              <Crumb href="#" $pad={5}>AM SignatureDrums</Crumb>
            </Path>
            <MediaRow $mb={9}>
              <SmallGroup $w={100}><Drop label="Media types" value="すべてのメディアタ." tight fs={10} /></SmallGroup>
              <SmallGroup $w={25}><Btn aria-label="Rewind"><Icon name="rewind" size={12} /></Btn></SmallGroup>
              <SmallGroup $w={25}><Btn aria-label="Shuffle"><Icon name="shuffle" size={13} /></Btn></SmallGroup>
              <SmallGroup $w={25} $dark><Btn aria-label="Settings"><Icon name="gear" size={12} /></Btn></SmallGroup>
              <SmallGroup $w={25}><Btn $on aria-label="Filters"><Icon name="layout" size={14} /></Btn></SmallGroup>
            </MediaRow>
            <Filters>
              {filters.map((f) => <SmallGroup key={f.label}><Drop label={f.label} value={f.label} tight fs={11} /></SmallGroup>)}
              {filters.map((f) => (
                <FilterList key={f.label} $pad={f.pad}>
                  <ul>{f.items.map((t, i) => <FilterItem key={t} $dim={f.dim && i < 4} $sel={f.dim && i === 4}>{t}</FilterItem>)}</ul>
                  <Track $thumb={f.thumb} />
                </FilterList>
              ))}
            </Filters>
            <Results>
              <ResultTable>
                <thead><tr><td><Icon name="sort" size={9} /></td><th scope="col">Name</th></tr></thead>
                <tbody>{files.map((f) => <tr key={f}><td><Icon name="wave" /></td><td>{f}</td></tr>)}</tbody>
              </ResultTable>
              <ResultTrack><Track $thumb={320} /></ResultTrack>
            </Results>
            <Track $w={202} $thumb={78} />
          </MediaPanel>
        </RightZone>
      </Main>

      <Transport>
        <Cluster $gap={6}>
          <Group $w={25}><Btn aria-label="Constrain delay compensation"><Icon name="clock" /></Btn></Group>
          <Cluster $gap={3}>
            <Group $w={43} $dark><Btn aria-label="Record mode"><Icon name="dot" size={17} /></Btn><Btn $w={20} aria-label="Record options"><Icon name="tri" size={10} /></Btn></Group>
            <Dots />
          </Cluster>
          <Cluster $gap={3}>
            <Group $w={44} $dark><Btn aria-label="Audio record mode"><Icon name="wave" size={18} /></Btn><Btn $w={20} aria-label="Audio options"><Icon name="tri" size={10} /></Btn></Group>
            <Dots />
          </Cluster>
          <Cluster $gap={3}>
            <Group $w={213}><Drop label="MIDI record mode" value="新規パート" icon="midi" w={111} fs={11} /><Drop label="MIDI mix mode" value="ミックス" div fs={11} /></Group>
            <Dots />
          </Cluster>
          <Group $w={38}><Btn>AQ</Btn></Group>
        </Cluster>
        <Cluster $gap={6} $shift={5}>
          <Cluster $gap={10}>
            <Group $w={150}><Btn $w={24} $notch aria-label="Left locator"><Icon name="flagL" size={15} /></Btn><Position aria-label="Left locator position" defaultValue="1.  1.  1.    0" /></Group>
            <Group $w={150}><Btn $w={24} $notch aria-label="Right locator"><Icon name="flagR" size={15} /></Btn><Position aria-label="Right locator position" defaultValue="1.  1.  1.    0" /></Group>
          </Cluster>
          <Group $w={50}><Btn aria-label="Punch in"><Icon name="punchIn" size={14} /></Btn><Btn aria-label="Punch out"><Icon name="punchOut" size={14} /></Btn></Group>
          <Cluster $gap={3}>
            <MainTransport>
              <Btn $w={36} aria-label="To start"><Icon name="toStart" size={17} /></Btn>
              <Btn $w={38} aria-label="To end"><Icon name="toEnd" size={17} /></Btn>
              <Btn aria-label="Cycle"><Icon name="cycle" /></Btn>
              <StopBtn $w={50} $on aria-label="Stop"><Icon name="stop" size={15} /></StopBtn>
              <Btn $w={50} aria-label="Play"><Icon name="play" size={17} /></Btn>
              <Btn $w={48} aria-label="Record"><Icon name="record" size={17} /></Btn>
            </MainTransport>
            <Dots />
          </Cluster>
          <Group $w={38}><Btn aria-label="External sync"><Icon name="sync" size={15} /></Btn></Group>
          <Cluster $gap={3}>
            <Group $w={150} $dark><Btn $w={23} aria-label="Time format"><Icon name="note" size={15} /></Btn><Position aria-label="Position" defaultValue="1.  1.  1.    0" /></Group>
            <Dots />
          </Cluster>
          <Cluster $gap={3}>
            <Group $w={232}>
              <Btn $w={24} $on aria-label="Tempo track"><Icon name="tempo" size={14} /></Btn>
              <TempoField $w={65} aria-label="Tempo" defaultValue="120.000" />
              <Spin><Icon name="up" size={9} /><Icon name="tri" size={9} /></Spin>
              <TempoField $w={50} aria-label="Time signature" defaultValue="4/4" />
              <Btn>Tap</Btn>
              <Btn $w={25} $dark aria-label="Tap options"><Icon name="tri" size={10} /></Btn>
            </Group>
            <Dots />
          </Cluster>
        </Cluster>
        <Cluster $gap={6}>
          <Cluster $gap={3}>
            <Group $w={44}><Btn aria-label="Metronome"><Icon name="metronome" size={15} /></Btn><Btn $w={19} aria-label="Metronome setup"><Icon name="gear" size={12} /></Btn></Group>
            <Dots />
          </Cluster>
          <Cluster $gap={2}>
            <Levels><LevelDivider /><Level $h={1} /><Level $h={1} /><Level $h={11} $gap /><Level $h={11} /></Levels>
            <Dots />
          </Cluster>
        </Cluster>
      </Transport>
    </Page>
  );
}
